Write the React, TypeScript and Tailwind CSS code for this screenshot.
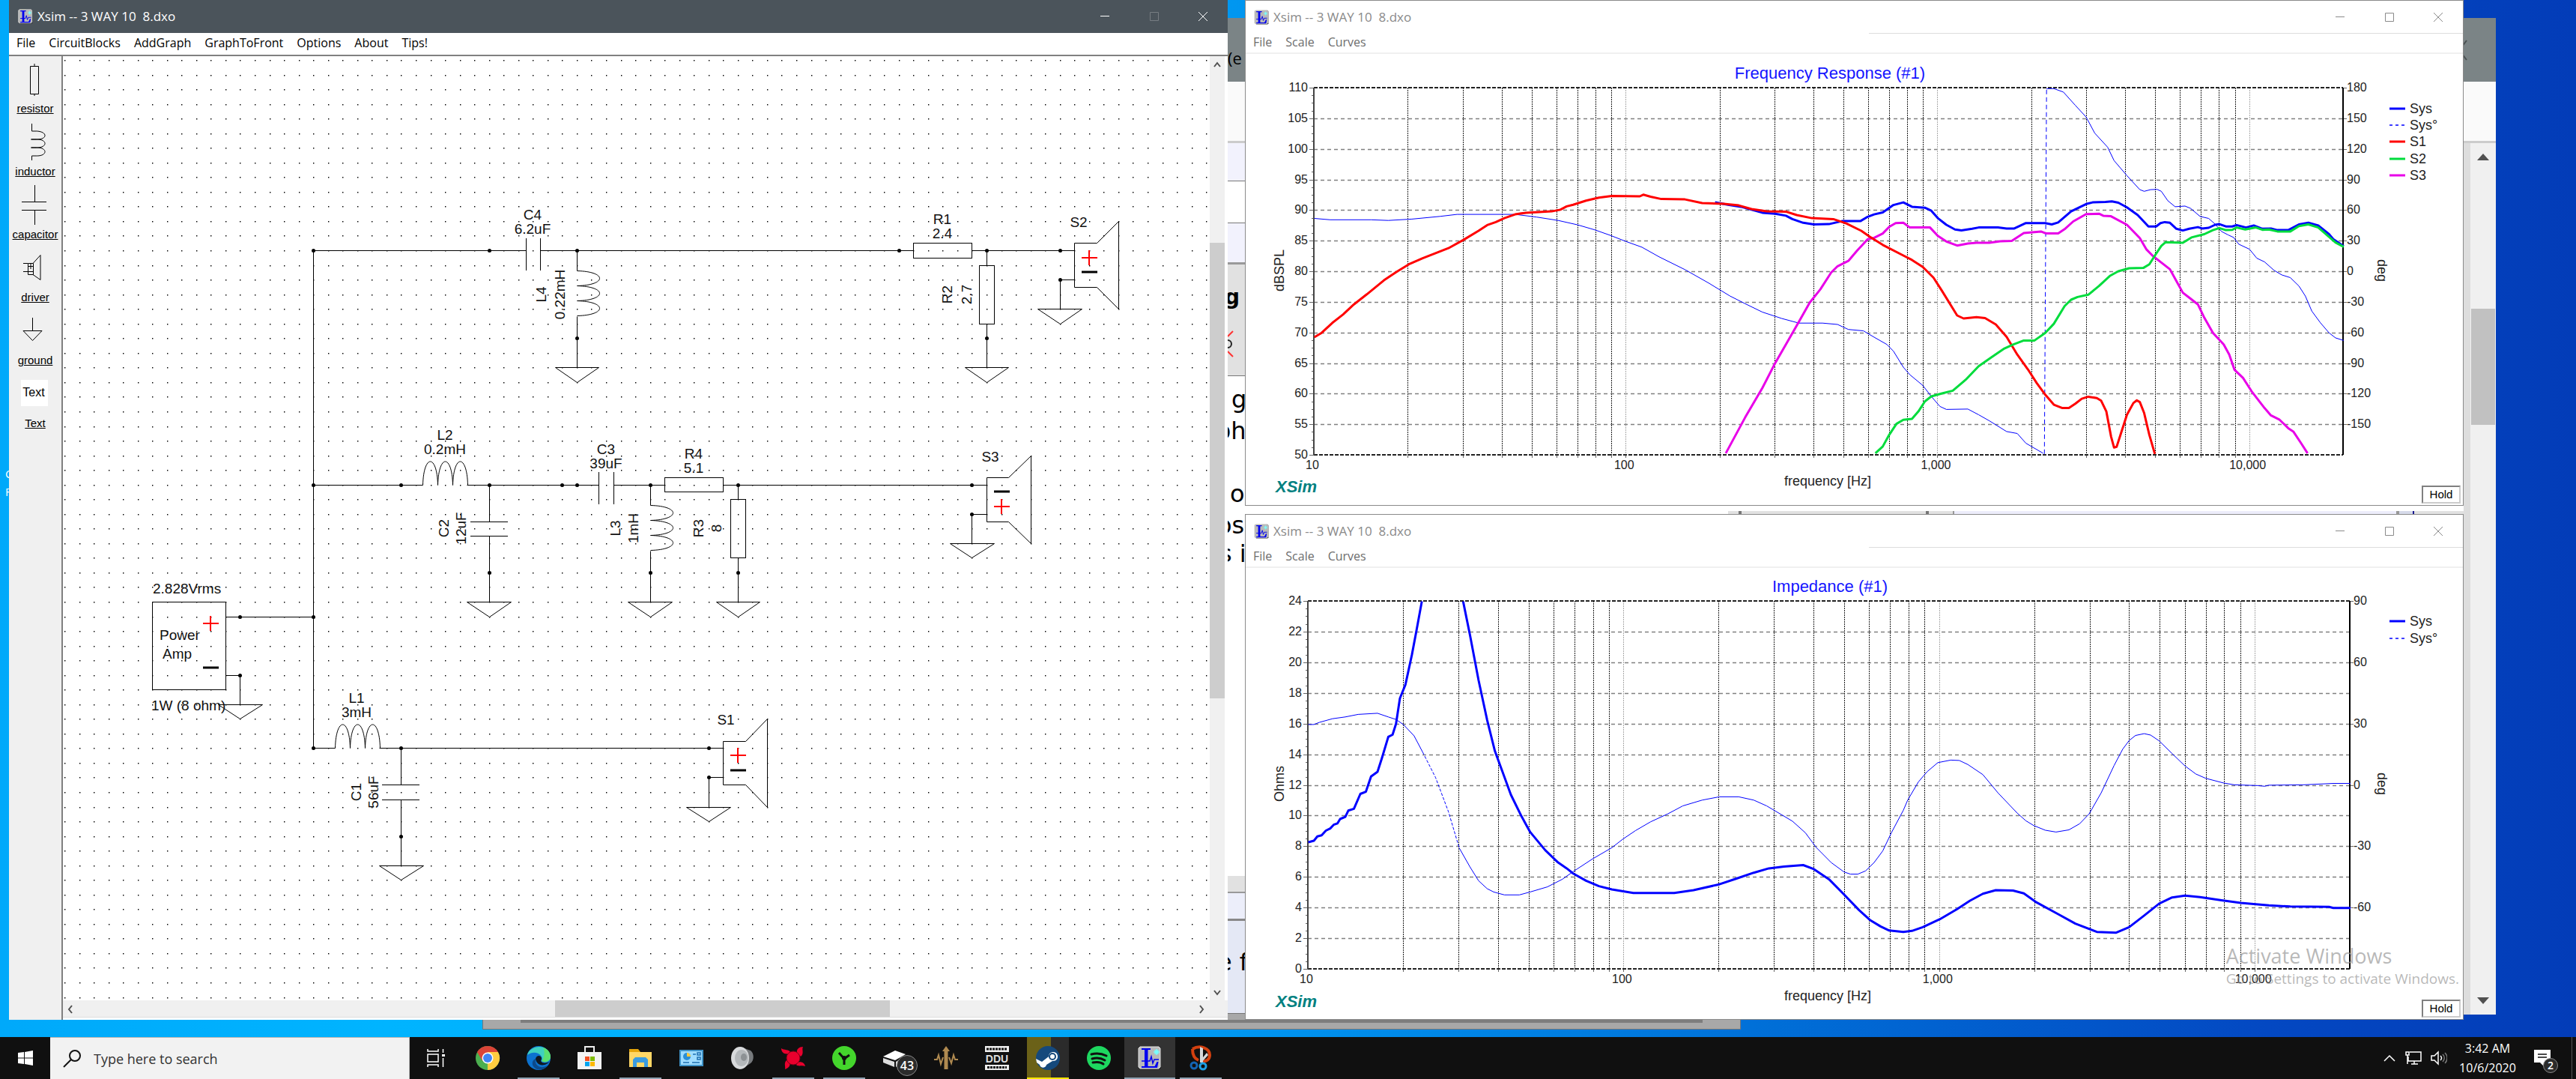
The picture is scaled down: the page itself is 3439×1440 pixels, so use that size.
import React from 'react'
import { clsx } from 'clsx'

const UI = "font-['Open_Sans','Noto_Sans',sans-serif]"
const ARIAL = '"Liberation Sans", Arial, sans-serif'

/* ---------- shared window pieces ---------- */

const XsimIcon: React.FC<{ className?: string }> = ({ className }) => (
  <svg viewBox="0 0 32 32" className={className} aria-hidden="true">
    <path d="M3 3l2-2h24l2 2v26l-2 2H5l-2-2z" fill="#222" />
    <path d="M1 3l2-2h25l2 2v25l-2 2H3l-2-2z" fill="#b9b9b9" stroke="#e8e8e8" />
    <path d="M5 3h12v2h-3.500v22h9l3-6h2l-1.500 8H5v-2h4V5H5z" fill="#0000ee" />
    <path d="M5 20h11l2-6 2 9 2-5h6" fill="none" stroke="#0000ee" strokeWidth="1.500" />
    <path d="M25 4v8M21 8h8M22.500 5.500l5 5M27.500 5.500l-5 5" stroke="#7ff" strokeWidth="1.500" />
  </svg>
)

interface WindowControlsProps {
  dark?: boolean
}

const WindowControls: React.FC<WindowControlsProps> = ({ dark }) => (
  <div className={clsx('ml-auto flex h-full', dark ? 'text-white' : 'text-[#8a8a8a]')}>
    <button aria-label="Minimize" className="flex h-full w-[66px] items-center justify-center">
      <svg width="14" height="14" stroke="currentColor"><path d="M1 6.500h12" /></svg>
    </button>
    <button
      aria-label="Maximize"
      disabled={dark}
      className={clsx('flex h-full w-[65px] items-center justify-center', dark && 'text-[#777d82]')}
    >
      <svg width="14" height="14" stroke="currentColor" fill="none"><path d="M1.500 1.500h11v11h-11z" /></svg>
    </button>
    <button aria-label="Close" className="flex h-full w-[66px] items-center justify-center">
      <svg width="14" height="14" stroke="currentColor"><path d="M1 1l12 12M13 1L1 13" /></svg>
    </button>
  </div>
)

const MenuBar: React.FC<{ items: string[]; className?: string }> = ({ items, className }) => (
  <nav className={clsx('flex items-center gap-[18px] pb-1 pl-[10px] text-[16px] leading-5', className)}>
    {items.map((item) => (
      <button key={item}>{item}</button>
    ))}
  </nav>
)

/* ---------- schematic editor ---------- */

const STEP = 19.54
const gx = (i: number) => Math.round(86 + i * STEP)
const gy = (j: number) => Math.round(80 + j * STEP)

const gridDots = () => {
  let d = ''
  for (let i = 0; i < 79; i++) {
    for (let j = 0; j < 65; j++) {
      d += `M${gx(i)} ${gy(j)}h1.4v1.4h-1.4z`
    }
  }
  return d
}
const GRID = gridDots()

const Wire: React.FC<{ pts: number[][] }> = ({ pts }) => (
  <polyline points={pts.map(([x, y]) => `${gx(x) + 0.5},${gy(y) + 0.5}`).join(' ')} />
)

const Dot: React.FC<{ x: number; y: number }> = ({ x, y }) => (
  <circle cx={gx(x) + 0.5} cy={gy(y) + 0.5} r="2.5" fill="#000" stroke="none" />
)

const Ground: React.FC<{ x: number; y: number }> = ({ x, y }) => (
  <>
    <Wire pts={[[x, y - 2], [x, y]]} />
    <Wire pts={[[x - 1.5, y], [x + 1.5, y], [x, y + 1], [x - 1.5, y]]} />
  </>
)

const CoilH: React.FC<{ x: number; y: number }> = ({ x, y }) => {
  const px = gx(x) + 0.5
  const py = gy(y) + 0.5
  return (
    <path
      d={[0, 20, 40].map((o) => `M${px + o} ${py}C${px + o + 1} ${py - 42} ${px + o + 19} ${py - 42} ${px + o + 20} ${py}`).join('')}
    />
  )
}

const CoilV: React.FC<{ x: number; y: number }> = ({ x, y }) => {
  const px = gx(x) + 0.5
  const py = gy(y) + 0.5
  return (
    <path
      d={[0, 20, 40].map((o) => `M${px} ${py + o}C${px + 40} ${py + o + 1} ${px + 40} ${py + o + 19} ${px} ${py + o + 20}`).join('')}
    />
  )
}

const Box: React.FC<{ x: number; y: number; w: number; h: number }> = ({ x, y, w, h }) => (
  <rect x={gx(x) + 0.5} y={gy(y) + 0.5} width={gx(x + w) - gx(x)} height={gy(y + h) - gy(y)} />
)

const Plus: React.FC<{ x: number; y: number }> = ({ x, y }) => (
  <path d={`M${gx(x) - 10} ${gy(y)}h21M${gx(x)} ${gy(y) - 10}v20`} stroke="#f00" strokeWidth="2" />
)

const Minus: React.FC<{ x: number; y: number }> = ({ x, y }) => (
  <path d={`M${gx(x) - 10} ${gy(y)}h21`} strokeWidth="3" />
)

// x, y is the upper terminal; the lower one sits two grid steps below
const Speaker: React.FC<{ x: number; y: number; flipped?: boolean }> = ({ x, y, flipped }) => (
  <>
    <Wire pts={[[x, y], [x + 1, y]]} />
    <Wire pts={[[x, y + 2], [x + 1, y + 2]]} />
    <Wire
      pts={[
        [x + 2.5, y - 0.5], [x + 1, y - 0.5], [x + 1, y + 2.5], [x + 2.5, y + 2.5],
        [x + 4, y + 4], [x + 4, y - 2], [x + 2.5, y - 0.5],
      ]}
    />
    <Plus x={x + 2} y={flipped ? y + 1.5 : y + 0.5} />
    <Minus x={x + 2} y={flipped ? y + 0.5 : y + 1.5} />
    <Dot x={x} y={y} />
    <Dot x={x} y={y + 2} />
    <Ground x={x} y={y + 4} />
  </>
)

interface LabelItem {
  text: string
  x: number
  y: number
  rotated?: boolean
  start?: boolean
}

const LABELS: LabelItem[] = [
  { text: 'C4', x: 711, y: 293 },
  { text: '6.2uF', x: 711, y: 312 },
  { text: 'L4', x: 729, y: 393, rotated: true },
  { text: '0.22mH', x: 754, y: 393, rotated: true },
  { text: 'R1', x: 1258, y: 299 },
  { text: '2.4', x: 1258, y: 318 },
  { text: 'R2', x: 1271, y: 393, rotated: true },
  { text: '2.7', x: 1297, y: 393, rotated: true },
  { text: 'S2', x: 1440, y: 303 },
  { text: 'L2', x: 594, y: 587 },
  { text: '0.2mH', x: 594, y: 606 },
  { text: 'C3', x: 809, y: 606 },
  { text: '39uF', x: 809, y: 625 },
  { text: 'R4', x: 926, y: 612 },
  { text: '5.1', x: 926, y: 631 },
  { text: 'S3', x: 1322, y: 616 },
  { text: 'C2', x: 599, y: 705, rotated: true },
  { text: '12uF', x: 622, y: 705, rotated: true },
  { text: 'L3', x: 828, y: 705, rotated: true },
  { text: '1mH', x: 852, y: 705, rotated: true },
  { text: 'R3', x: 939, y: 705, rotated: true },
  { text: '8', x: 963, y: 705, rotated: true },
  { text: '2.828Vrms', x: 204, y: 792, start: true },
  { text: 'Power', x: 213, y: 854, start: true },
  { text: 'Amp', x: 217, y: 879, start: true },
  { text: '1W (8 ohm)', x: 202, y: 948, start: true },
  { text: 'L1', x: 476, y: 938 },
  { text: '3mH', x: 476, y: 957 },
  { text: 'C1', x: 482, y: 1057, rotated: true },
  { text: '56uF', x: 505, y: 1057, rotated: true },
  { text: 'S1', x: 969, y: 967 },
]

const DOTS = [
  [17, 13], [29, 13], [35, 13], [57, 13], [63, 13], [35, 19], [63, 19],
  [17, 29], [23, 29], [29, 29], [34, 29], [35, 29], [40, 29], [46, 29],
  [29, 35], [40, 35], [46, 35], [12, 38], [17, 38], [12, 42], [17, 47], [23, 47], [23, 53],
]

const Schematic: React.FC = () => (
  <svg viewBox="84 75 1531 1260" preserveAspectRatio="xMinYMin slice" className="min-h-0 min-w-0 flex-1 bg-white">
    <path d={GRID} fill="#000" />
    <g fill="none" stroke="#000">
      {/* trunk */}
      <Wire pts={[[17, 13], [17, 47]]} />
      <Wire pts={[[11, 38], [17, 38]]} />
      {/* tweeter branch */}
      <Wire pts={[[17, 13], [31.5, 13]]} />
      <path d="M702.500 318v43M721.500 318v43" />
      <Wire pts={[[32.5, 13], [58, 13]]} />
      <Wire pts={[[35, 13], [35, 14.4]]} />
      <CoilV x={35} y={14.4} />
      <Wire pts={[[35, 17.5], [35, 19]]} />
      <Ground x={35} y={21} />
      <Box x={58} y={12.5} w={4} h={1} />
      <Wire pts={[[62, 13], [68, 13]]} />
      <Wire pts={[[63, 13], [63, 14]]} />
      <Box x={62.5} y={14} w={1} h={4} />
      <Wire pts={[[63, 18], [63, 19]]} />
      <Ground x={63} y={21} />
      <Speaker x={68} y={13} />
      {/* midrange branch */}
      <Wire pts={[[17, 29], [24.45, 29]]} />
      <CoilH x={24.45} y={29} />
      <Wire pts={[[27.5, 29], [36.5, 29]]} />
      <path d="M799.500 630v43M819.500 630v43" />
      <Wire pts={[[37.5, 29], [41, 29]]} />
      <Box x={41} y={28.5} w={4} h={1} />
      <Wire pts={[[45, 29], [62, 29]]} />
      <Wire pts={[[29, 29], [29, 31.5]]} />
      <path d="M628 696.500h50M628 715.500h50" />
      <Wire pts={[[29, 32.5], [29, 35]]} />
      <Ground x={29} y={37} />
      <Wire pts={[[40, 29], [40, 30.4]]} />
      <CoilV x={40} y={30.4} />
      <Wire pts={[[40, 33.5], [40, 35]]} />
      <Ground x={40} y={37} />
      <Wire pts={[[46, 29], [46, 30]]} />
      <Box x={45.5} y={30} w={1} h={4} />
      <Wire pts={[[46, 34], [46, 35]]} />
      <Ground x={46} y={37} />
      <Speaker x={62} y={29} flipped />
      {/* woofer branch */}
      <Wire pts={[[17, 47], [18.45, 47]]} />
      <CoilH x={18.45} y={47} />
      <Wire pts={[[21.5, 47], [44, 47]]} />
      <Wire pts={[[23, 47], [23, 49.5]]} />
      <path d="M510 1047.500h50M510 1067.500h50" />
      <Wire pts={[[23, 50.5], [23, 53]]} />
      <Ground x={23} y={55} />
      <Speaker x={44} y={47} />
      {/* amplifier */}
      <Box x={6} y={37} w={5} h={6} />
      <Wire pts={[[11, 42], [12, 42]]} />
      <Ground x={12} y={44} />
      <Plus x={10} y={38.5} />
      <Minus x={10} y={41.5} />
      {DOTS.map(([x, y]) => (
        <Dot key={`${x}-${y}`} x={x} y={y} />
      ))}
    </g>
    <g fontFamily={ARIAL} fontSize="19" fill="#111">
      {LABELS.map((l) => (
        <text
          key={l.text}
          x={l.x}
          y={l.y}
          textAnchor={l.start ? 'start' : 'middle'}
          transform={l.rotated ? `rotate(-90 ${l.x} ${l.y})` : undefined}
        >
          {l.text}
        </text>
      ))}
    </g>
  </svg>
)

const PARTS: { name: string; art: React.ReactNode }[] = [
  { name: 'resistor', art: <path d="M28.500 13.500h11v37h-11zM34 10v3M34 50v3" /> },
  {
    name: 'inductor',
    art: <path d="M30.500 6v10h7c14 1 14 11 0 11h-8h8c14 0 14 11 0 11h-8h8c14 0 14 11 0 11h-7v6" />,
  },
  { name: 'capacitor', art: <path d="M34.500 4v22M17 26.500h33M17 37.500h33M34.500 38v19" /> },
  {
    name: 'driver',
    art: <path d="M25.500 24.500h7v15h-7zM32 24.500l10-11v33l-10-7M19 24.500h6M19 35.500h6M26 28.500h6M29 25v7M26 35.500h6" />,
  },
  { name: 'ground', art: <path d="M31.500 13v17M19 30.500h25l-12.500 13z" /> },
  {
    name: 'Text',
    art: (
      <>
        <rect x="16" y="12" width="36" height="35" fill="#fff" stroke="none" />
        <text x="33" y="34" textAnchor="middle" fontFamily={ARIAL} fontSize="16" fill="#000" stroke="none">Text</text>
      </>
    ),
  },
]

const PartsPalette: React.FC = () => (
  <aside className="flex w-[70px] shrink-0 flex-col bg-[#f0f0f0]">
    {PARTS.map((part) => (
      <button
        key={part.name}
        className="flex h-[84px] flex-col items-center pb-1 font-['Liberation_Sans',Arial,sans-serif] text-[15px] leading-5 underline"
      >
        <svg viewBox="0 0 70 60" className="h-[60px] w-full" fill="none" stroke="#000">
          {part.art}
        </svg>
        {part.name}
      </button>
    ))}
  </aside>
)

const Chevron: React.FC<{ d: string }> = ({ d }) => (
  <svg width="20" height="20" fill="none" stroke="#505050" strokeWidth="2" className="shrink-0">
    <path d={d} />
  </svg>
)

const EditorWindow: React.FC = () => (
  <section className="absolute bottom-[23px] left-[12px] top-0 flex w-[1627px] flex-col bg-white">
    <header className="flex h-11 shrink-0 items-center bg-[#4b545b] pl-3 text-white">
      <XsimIcon className="h-5 w-5" />
      <h1 className="ml-[6px] whitespace-pre text-[17px] leading-5">Xsim -- 3 WAY 10  8.dxo</h1>
      <WindowControls dark />
    </header>
    <MenuBar
      className="h-[31px] shrink-0 border-b-2 border-[#808080] text-black"
      items={['File', 'CircuitBlocks', 'AddGraph', 'GraphToFront', 'Options', 'About', 'Tips!']}
    />
    <div className="flex min-h-0 flex-1">
      <PartsPalette />
      <div className="flex min-w-0 flex-1 flex-col border-l-2 border-[#808080]">
        <div className="flex min-h-0 flex-1">
          <Schematic />
          <div className="flex w-5 shrink-0 flex-col bg-[#f0f0f0]">
            <Chevron d="M6 14l4-5 4 5" />
            <div className="mt-[229px] h-[608px] bg-[#cdcdcd]" />
            <div className="mt-auto"><Chevron d="M6 7l4 5 4-5" /></div>
          </div>
          <div className="w-1 shrink-0 bg-white" />
        </div>
        <div className="flex h-[22px] shrink-0 items-center bg-[#f0f0f0] pr-6">
          <Chevron d="M12 6l-4 5 4 5" />
          <div className="ml-[637px] h-full w-[447px] bg-[#cdcdcd]" />
          <div className="ml-auto"><Chevron d="M7 6l4 5-4 5" /></div>
        </div>
        <div className="h-1 shrink-0 border-t border-[#ddd]" />
      </div>
    </div>
  </section>
)

/* ---------- graph windows ---------- */

// traces are stored in raster units, counted from the left edge of the window
const UNIT_X = 0.574
const ORIGIN_X = -22

interface Trace {
  color: string
  width: number
  dash?: string
  pts: number[]
}

interface GraphProps {
  title: string
  plot: { left: number; right: number; top: number; bottom: number }
  unitY: number
  originY: number
  yLabel: string
  degY: number
  left: string[]
  right: string[]
  rightEvery: number
  traces: Trace[]
  legend: { name: string; color: string; dashed?: boolean }[]
  legendY: number[]
  view: string
  footY: number
}

const BLUE = '#0000ff'

const GraphBody: React.FC<GraphProps> = (g) => {
  const { left, right, top, bottom } = g.plot
  const decade = (right - left) / Math.log10(2000)
  const rowH = (bottom - top) / (g.left.length - 1)

  const verticals: { x: number; major: boolean }[] = []
  for (let d = 0; d < 4; d++) {
    for (let n = 1; n < 10; n++) {
      const x = left + decade * (d + Math.log10(n))
      if (x > left + 1 && x < right - 1) verticals.push({ x: Math.round(x) + 0.5, major: n === 1 })
    }
  }
  const minors = Array.from({ length: (g.left.length - 1) * 4 }, (_, i) => Math.round(top + (i * rowH) / 4) + 0.5)

  const toPoints = (pts: number[]) => {
    const out: string[] = []
    for (let i = 0; i < pts.length; i += 2) {
      out.push(`${(ORIGIN_X + pts[i] * UNIT_X).toFixed(1)},${(g.originY + pts[i + 1] * g.unitY).toFixed(1)}`)
    }
    return out.join(' ')
  }

  return (
    <svg viewBox={g.view} preserveAspectRatio="xMinYMin meet" className="block h-full w-full" fontFamily={ARIAL}>
      <text x="780" y={top - 12} textAnchor="middle" fontSize="22" fill="#1414ff">{g.title}</text>

      <g stroke="#808080" strokeWidth="1.5" strokeDasharray="5 4">
        {g.left.map((v, i) => {
          const y = Math.round(top + i * rowH) + 0.5
          return i > 0 && i < g.left.length - 1 && <path key={v} d={`M${left} ${y}H${right}`} />
        })}
      </g>
      <g strokeDasharray="2 1">
        {verticals.map((v) => (
          <path key={v.x} d={`M${v.x} ${top}V${bottom}`} stroke={v.major ? '#aaa' : '#222'} />
        ))}
      </g>
      <g stroke="#666">
        {verticals.map((v) => (
          <path key={v.x} d={`M${v.x} ${bottom}v4`} />
        ))}
        {minors.map((y) => (
          <path key={y} d={`M${left - 3} ${y}h3`} />
        ))}
        {g.left.map((v, i) => (
          <path key={v} d={`M${left - 6} ${Math.round(top + i * rowH) + 0.5}h6`} />
        ))}
        {g.right.map((v, i) => (
          <path key={v} d={`M${right} ${Math.round(top + i * rowH * g.rightEvery) + 0.5}h5`} />
        ))}
      </g>
      <path d={`M${left} ${top}H${right}M${left} ${bottom}H${right}`} stroke="#222" strokeWidth="2" strokeDasharray="5 2" />
      <path d={`M${left} ${top}V${bottom}`} stroke="#444" strokeWidth="2" />
      <path d={`M${right} ${top}V${bottom}`} stroke="#000" strokeWidth="2" />

      <g fill="none" strokeLinejoin="round">
        {g.traces.map((t, i) => (
          <polyline key={i} points={toPoints(t.pts)} stroke={t.color} strokeWidth={t.width} strokeDasharray={t.dash} />
        ))}
      </g>

      <g fontSize="16" fill="#222">
        {g.left.map((v, i) => (
          <text key={v} x={left - 8} y={Math.round(top + i * rowH) + 5} textAnchor="end">{v}</text>
        ))}
        {g.right.map((v, i) => (
          <text key={v} x={right + 5} y={Math.round(top + i * rowH * g.rightEvery) + 5}>{v}</text>
        ))}
        {['10', '100', '1,000', '10,000'].map((v, i) => (
          <text key={v} x={left + decade * i - 2} y={bottom + 19} textAnchor="middle">{v}</text>
        ))}
      </g>
      <g fontSize="18" fill="#222">
        <text x="777" y={g.footY - 9} textAnchor="middle">frequency [Hz]</text>
        <text x="51" y={g.degY} textAnchor="middle" transform={`rotate(-90 51 ${g.degY})`}>{g.yLabel}</text>
        <text x="1511" y={g.degY} textAnchor="middle" transform={`rotate(90 1511 ${g.degY})`}>deg</text>
        {g.legend.map((l, i) => (
          <g key={l.name}>
            <path
              d={`M1527 ${g.legendY[i]}h21`}
              stroke={l.color}
              strokeWidth={l.dashed ? 1.5 : 3}
              strokeDasharray={l.dashed ? '4 4' : undefined}
            />
            <text x="1554" y={g.legendY[i] + 6}>{l.name}</text>
          </g>
        ))}
      </g>
      <text x="40" y={g.footY} fontSize="22" fontWeight="bold" fontStyle="italic" fill="#008080">XSim</text>
    </svg>
  )
}

const GraphWindow: React.FC<GraphProps & { className: string }> = ({ className, ...graph }) => (
  <section className={clsx('absolute left-[1662px] right-[150px] flex flex-col border border-[#8a8a8a] bg-white', className)}>
    <header className="flex h-[43px] shrink-0 items-center pl-[11px] text-[#8a8a8a]">
      <XsimIcon className="h-5 w-5" />
      <h2 className="ml-[6px] whitespace-pre text-[17px] leading-5">Xsim -- 3 WAY 10  8.dxo</h2>
      <WindowControls />
    </header>
    <div className="ml-[832px] shrink-0 border-t border-[#ddd]" />
    <MenuBar className="h-[27px] shrink-0 border-b-2 border-[#f0f0f0] text-[#6d6d6d]" items={['File', 'Scale', 'Curves']} />
    <div className="min-h-0 flex-1">
      <GraphBody {...graph} />
    </div>
    <button className="absolute bottom-[2px] right-[3px] h-6 w-[52px] border-2 border-b-[#ccc] border-l-[#808080] border-r-[#ccc] border-t-[#808080] bg-white font-['Liberation_Sans',Arial,sans-serif] text-[15px] leading-5 text-black">
      Hold
    </button>
  </section>
)

const RESPONSE: Trace[] = [
  {
    color: BLUE, width: 1,
    pts: [198,653,235,657,330,657,370,659,425,655,490,647,530,641,665,641,715,649,765,659,810,672,850,687,885,703,925,723,960,739,1000,768,1060,806,1115,846,1165,885,1200,908,1240,933,1285,952,1325,966,1380,966,1415,970,1440,985,1475,989,1500,1008,1530,1030,1545,1050,1568,1098,1583,1120,1613,1152,1633,1185,1653,1215,1668,1224,1718,1223,1743,1240,1768,1258,1808,1290,1833,1296,1853,1325,1893,1355],
  },
  { color: BLUE, width: 1, dash: '6 4', pts: [1896,1357,1901,265] },
  {
    color: BLUE, width: 1,
    pts: [1901,265,1918,265,1940,275,1968,315,1993,350,2013,398,2043,440,2058,480,2088,525,2118,567,2128,572,2143,567,2158,566,2168,572,2183,600,2200,618,2223,616,2236,623,2258,647,2278,653,2293,670,2308,692,2323,702,2336,710,2348,730,2373,745,2390,772,2408,783,2430,808,2448,822,2468,830,2488,855,2503,885,2518,930,2538,965,2558,995,2573,1010,2592,1018],
  },
  {
    color: BLUE, width: 3,
    pts: [1130,605,1160,612,1190,618,1215,627,1240,636,1270,639,1295,645,1310,655,1335,666,1360,671,1395,670,1425,661,1468,661,1485,648,1500,641,1520,635,1545,613,1568,605,1588,618,1618,621,1633,630,1648,652,1668,672,1688,686,1703,689,1728,684,1743,680,1788,680,1808,683,1826,683,1853,667,1898,667,1913,671,1928,665,1958,632,1993,610,2008,605,2038,604,2053,602,2068,606,2088,620,2113,643,2138,677,2156,677,2166,667,2176,664,2188,666,2203,684,2218,689,2233,684,2253,679,2263,683,2278,681,2293,672,2303,670,2318,677,2333,677,2343,673,2365,680,2383,674,2403,684,2423,683,2438,688,2463,688,2488,671,2510,666,2533,674,2558,700,2568,715,2592,736],
  },
  {
    color: '#e800e8', width: 3,
    pts: [1155,1355,1200,1248,1240,1160,1268,1090,1300,1018,1325,962,1350,905,1375,865,1400,815,1415,796,1440,780,1460,750,1485,715,1500,711,1520,698,1535,678,1550,667,1568,666,1583,680,1630,680,1648,705,1668,722,1693,734,1718,728,1738,726,1768,726,1793,721,1820,720,1848,697,1888,692,1900,698,1928,698,1943,685,1963,662,1993,640,2023,639,2033,645,2050,646,2088,672,2118,712,2133,745,2148,765,2168,785,2188,805,2203,840,2218,875,2233,890,2253,910,2268,950,2288,995,2313,1030,2326,1060,2338,1105,2358,1130,2378,1170,2408,1220,2423,1242,2443,1255,2463,1280,2475,1290,2493,1325,2508,1355],
  },
  {
    color: '#f00', width: 3,
    pts: [198,1008,215,995,240,965,265,940,290,910,320,880,360,838,390,812,418,790,450,772,480,757,510,742,545,717,580,690,600,673,620,664,640,652,665,641,690,636,750,632,770,627,785,617,800,612,830,600,860,591,890,586,955,587,963,582,980,588,1005,595,1060,596,1100,607,1150,609,1185,614,1215,625,1250,632,1296,633,1320,643,1355,652,1405,655,1435,668,1470,690,1490,708,1520,732,1568,764,1588,777,1613,798,1638,830,1658,870,1693,943,1708,952,1738,948,1758,951,1783,970,1808,1007,1833,1060,1858,1105,1878,1145,1898,1180,1918,1210,1938,1220,1953,1220,1968,1207,1983,1192,1998,1186,2018,1190,2028,1198,2040,1230,2051,1305,2058,1338,2064,1336,2073,1300,2088,1240,2103,1205,2111,1197,2118,1202,2128,1235,2140,1300,2153,1357],
  },
  {
    color: '#00dc3c', width: 3,
    pts: [1503,1355,1520,1335,1535,1300,1552,1267,1568,1255,1588,1252,1603,1230,1618,1200,1633,1185,1658,1176,1683,1168,1713,1135,1743,1095,1773,1068,1803,1042,1823,1030,1848,1018,1873,1018,1898,995,1918,968,1943,915,1958,896,1973,888,1998,881,2023,855,2048,825,2068,811,2093,802,2126,801,2140,790,2155,760,2168,735,2178,724,2218,726,2238,710,2268,700,2288,688,2303,682,2318,688,2333,687,2343,680,2363,686,2388,680,2403,687,2418,686,2438,692,2468,692,2488,676,2510,671,2533,680,2558,708,2573,725,2592,738],
  },
]

const IMPEDANCE: Trace[] = [
  {
    color: BLUE, width: 1,
    pts: [184,592,197,592,210,586,240,576,270,571,300,564,345,561,370,571,388,578,405,592,430,623,450,668],
  },
  { color: BLUE, width: 1, dash: '4 2', pts: [450,668,480,738,510,832,535,932] },
  {
    color: BLUE, width: 1,
    pts: [535,932,560,984,580,1022,600,1044,615,1053,640,1061,675,1061,700,1053,740,1039,775,1018,800,997,845,962,890,931,915,908,945,884,980,860,1020,838,1055,816,1100,800,1140,791,1185,791,1220,800,1250,816,1270,830,1310,858,1340,890,1365,930,1400,972,1430,998,1445,1004,1462,1004,1480,995,1500,972,1520,940,1540,890,1568,828,1578,800,1603,750,1623,722,1648,697,1678,690,1698,691,1718,702,1753,730,1788,780,1833,836,1853,857,1871,870,1898,883,1923,888,1953,882,1978,865,2000,838,2028,780,2058,705,2078,660,2093,636,2108,622,2128,617,2143,621,2163,637,2193,672,2223,706,2248,728,2271,740,2313,753,2338,758,2393,760,2408,762,2418,759,2498,758,2568,754,2608,754],
  },
  {
    color: BLUE, width: 3,
    pts: [184,916,197,912,205,900,215,897,225,884,235,878,243,868,252,864,258,852,270,846,277,829,290,824,305,783,318,777,330,735,345,722,355,685,370,626,380,620,388,590,397,520,410,482,425,400,436,330,448,253],
  },
  {
    color: BLUE, width: 3,
    pts: [544,253,560,345,580,470,600,580,618,665,635,720,655,785,680,845,700,888,735,938,765,972,785,988,800,1002,830,1022,860,1037,890,1046,940,1056,1035,1056,1080,1048,1140,1032,1180,1016,1220,1000,1255,988,1290,983,1335,979,1360,990,1395,1018,1430,1060,1465,1103,1490,1130,1515,1148,1535,1159,1568,1163,1588,1160,1613,1150,1653,1128,1693,1100,1723,1077,1753,1058,1783,1048,1823,1049,1848,1057,1878,1082,1928,1114,1968,1140,2018,1163,2063,1165,2093,1150,2128,1118,2163,1085,2193,1068,2223,1063,2258,1067,2308,1076,2353,1083,2418,1090,2468,1093,2558,1094,2568,1097,2608,1097],
  },
]

/* ---------- page behind the windows ---------- */

const BackgroundBrowser: React.FC = () => (
  <div className="absolute bottom-[30px] left-[1639px] right-[107px] top-[24px] flex flex-col overflow-hidden bg-white font-['DejaVu_Sans',Verdana,sans-serif] text-black">
    <div className="flex h-[85px] shrink-0 items-center justify-between bg-[#7b8486]">
      <span className="pt-5 font-['Open_Sans',sans-serif] text-[22px] leading-8">(e</span>
      <svg width="60" height="28" stroke="#4a5052" strokeWidth="2"><path d="M1 1l20 26M21 1L1 27" /></svg>
    </div>
    <div className="h-[82px] shrink-0 border-b-[3px] border-[#ccc] bg-[#fafafa]" />
    <div className="flex min-h-0 flex-1">
      <div className="flex min-w-0 flex-1 flex-col overflow-hidden">
        <div className="h-[51px] shrink-0 border-b border-[#777] bg-[#f2f2fd]" />
        <div className="h-14 shrink-0 border-b border-[#777]" />
        <div className="h-[55px] shrink-0 border-b-[3px] border-[#999] bg-[#f2f2fd]" />
        <div className="flex h-[149px] shrink-0 flex-col border-b border-[#777] bg-[#e1e1e1] pt-7">
          <span className="-ml-1 text-[28px] font-bold leading-8">g</span>
          <svg width="12" height="36" fill="none" className="mt-7">
            <path d="M0 8l7-7M0 28l7 7" stroke="#f33" strokeWidth="2" />
            <circle cx="0" cy="18" r="5" stroke="#222" strokeWidth="2" />
          </svg>
        </div>
        <div className="h-[180px] shrink-0 text-[32px] leading-[42px]">
          <p className="mt-[10px] pl-[5px]">g</p>
          <p className="-ml-4 whitespace-nowrap">ph</p>
          <p className="mt-[42px] pl-[3px]">o</p>
        </div>
        {/* strip that shows between the two graph windows */}
        <div className="flex h-5 shrink-0">
          <div className="flex-1" />
          <div className="h-full w-[18px] border-r-4 border-[#777] bg-[#e1e1e1]" />
          <div className="h-full w-[250px] border-r-4 border-[#777] bg-[#e1e1e1]" />
          <div className="h-full w-[34px] border-r-2 border-[#999] bg-[#e1e1e1]" />
          <div className="h-full w-[594px] border-r-4 border-[#999] bg-[#ededfb]" />
          <div className="h-full w-5 border-r-2 border-[#1a1a90] bg-[#d6daea]" />
          <div className="h-full w-[66px] bg-[#e1e1e1]" />
        </div>
        <div className="-mt-5 flex-1 text-[32px] leading-[38px]">
          <p className="-ml-[14px] whitespace-nowrap">os</p>
          <p className="-ml-[11px] whitespace-nowrap">s i</p>
        </div>
        <div className="h-[23px] shrink-0 border-b-2 border-[#999] bg-[#e1e1e1]" />
        <div className="h-[37px] shrink-0 border-b-[3px] border-[#888] bg-[#eceefa]" />
        <div className="h-[125px] shrink-0 bg-[#e4e8f5] pt-[34px] text-[32px] leading-[42px]">
          <p className="-ml-[14px] whitespace-nowrap">e f</p>
        </div>
      </div>
      <div className="w-[9px] shrink-0 bg-[#ddd]" />
      <div className="flex w-[34px] shrink-0 flex-col items-center bg-[#f0f0f0] py-[14px]">
        <svg width="16" height="9" fill="#505050"><path d="M0 9l8-9 8 9z" /></svg>
        <div className="mt-[198px] h-[155px] w-8 bg-[#c1c1c1]" />
        <svg width="16" height="9" fill="#505050" className="mt-auto shrink-0"><path d="M0 0l8 9 8-9z" /></svg>
      </div>
    </div>
  </div>
)

/* ---------- taskbar ---------- */

interface TaskItem {
  name: string
  icon: React.ReactNode
  running?: boolean
}

const TASKS: TaskItem[] = [
  {
    name: 'Google Chrome',
    icon: (
      <>
        <circle cx="16" cy="16" r="16" fill="#4caf50" />
        <path d="M16 16L2.100 8A16 16 0 0 1 29.900 8z" fill="#db4437" />
        <path d="M16 16L29.900 8A16 16 0 0 1 16 32z" fill="#ffcd40" />
        <path d="M16 8h14L23 20z" fill="#ffcd40" />
        <path d="M9 20L2 8l14 0z" fill="#db4437" />
        <circle cx="16" cy="16" r="7.500" fill="#fff" />
        <circle cx="16" cy="16" r="6" fill="#4285f4" />
      </>
    ),
  },
  {
    name: 'Microsoft Edge',
    running: true,
    icon: (
      <>
        <circle cx="16" cy="16" r="16" fill="#0c72cf" />
        <path d="M1 12C4-2 30-4 32 14c0 7-8 9-12 6 4-7-8-16-19-8z" fill="#3fd0c0" />
        <path d="M22 2c7 2 10 8 10 12 0 7-8 9-12 6 5-6 4-14 2-18z" fill="#5be070" />
        <path d="M12 17c-2 10 8 14 16 9-4 6-10 6-14 5-8-3-8-12-2-14z" fill="#0c4a8c" />
        <path d="M12 17c1-5 7-5 8-1 0 2-1 3-1 4 2 4 8 3 11 1-3 5-16 8-18-4z" fill="#101820" />
      </>
    ),
  },
  {
    name: 'Microsoft Store',
    icon: (
      <>
        <path d="M10 9V1h12v8" fill="none" stroke="#eee" strokeWidth="2" />
        <path d="M0 8h32v23H0z" fill="#f3f3f3" />
        <path d="M10 14h6v6h-6z" fill="#f25022" />
        <path d="M17 14h6v6h-6z" fill="#7fba00" />
        <path d="M10 21h6v6h-6z" fill="#00a4ef" />
        <path d="M17 21h6v6h-6z" fill="#ffb900" />
      </>
    ),
  },
  {
    name: 'File Explorer',
    running: true,
    icon: (
      <>
        <path d="M1 4h12l3 4H1z" fill="#e5a50a" />
        <path d="M1 8h30v20H1z" fill="#ffd766" />
        <path d="M6 28V18l3-3h14l3 3v10h-5v-6h-10v6z" fill="#3a9be0" />
      </>
    ),
  },
  {
    name: 'Control Panel',
    icon: (
      <>
        <path d="M1 6h30v20H1z" fill="#9fdcff" stroke="#3f93c8" strokeWidth="2" />
        <circle cx="10" cy="14" r="5" fill="#2b8fd6" />
        <path d="M10 14V9a5 5 0 0 1 5 5z" fill="#ffc83d" />
        <path d="M18 11h4M24 9h4v3h-4zM24 15h4v3h-4zM5 22h8M17 22h10" stroke="#1f6fb0" strokeWidth="1.500" fill="none" />
      </>
    ),
  },
  {
    name: 'Sound',
    icon: (
      <>
        <path d="M13 1l14 5c5 4 5 13 0 17l-12 8z" fill="#777a7d" />
        <ellipse cx="13" cy="16" rx="12" ry="15" fill="#d8dadc" />
        <ellipse cx="15" cy="16" rx="9" ry="11" fill="#b4b8bb" />
        <ellipse cx="18" cy="15" rx="4" ry="5" fill="#8d9194" />
      </>
    ),
  },
  {
    name: 'Fan Control',
    running: true,
    icon: (
      <g fill="#e8002d">
        <path d="M10 10C4 12 0 8 0 3c4 3 10 1 12 5zM21 9c-1-5 3-8 8-8-2 4 2 9-3 13zM22 22c4-2 9 0 10 5-5-2-9 1-12-2zM10 20c3 3 2 9-5 11 1-4-2-8 2-12z" />
        <path d="M9 9l14 14M23 9L9 23" stroke="#e8002d" strokeWidth="3" />
        <circle cx="16" cy="16" r="9" stroke="#7d0018" />
      </g>
    ),
  },
  {
    name: 'Razer',
    running: true,
    icon: (
      <>
        <circle cx="16" cy="16" r="16" fill="#44d62c" />
        <path d="M16 17L9 9M16 17l7-5M16 17v8" stroke="#101010" strokeWidth="3" />
        <circle cx="16" cy="16" r="3" fill="#101010" />
      </>
    ),
  },
  {
    name: 'Storage',
    icon: (
      <>
        <path d="M0 14L16 6l14 5-14 8z" fill="#fff" />
        <path d="M0 16l15 5v7L0 22zM17 21l13-8v6l-13 9z" fill="#ddd" />
      </>
    ),
  },
  {
    name: 'Equalizer',
    icon: (
      <g fill="none" stroke="#b08a50">
        <path d="M0 18h4l2-6 3 12 3-9M20 15l3 8 3-11 2 6h4" strokeWidth="2" />
        <path d="M16 4v27" strokeWidth="5" />
        <path d="M11 7l5-7 5 7z" fill="#b08a50" stroke="none" />
      </g>
    ),
  },
  {
    name: 'Display Driver Uninstaller',
    icon: (
      <>
        <path d="M0 0h32v32H0z" fill="#eee" />
        <path d="M0 8h32v17H0z" fill="#111" />
        <text x="16" y="22" textAnchor="middle" fontFamily={ARIAL} fontWeight="bold" fontSize="14" fill="#ddd">DDU</text>
        <path d="M2 4h28M3 28.500h26" stroke="#111" strokeWidth="3" strokeDasharray="3 1" />
      </>
    ),
  },
  {
    name: 'Steam',
    icon: (
      <>
        <circle cx="16" cy="16" r="16" fill="#15497c" />
        <path d="M0 17l8 4 9-7c0-8 12-8 12 0 0 5-4 6-7 6l-8 5c-1 5-8 5-9 0L1 22z" fill="#fff" />
        <circle cx="22" cy="14" r="4" fill="#fff" stroke="#15497c" strokeWidth="2" />
      </>
    ),
  },
  {
    name: 'Spotify',
    icon: (
      <>
        <circle cx="16" cy="16" r="16" fill="#1ed760" />
        <path d="M6 11c7-2 14-1 20 2M7 17c6-2 12-1 17 2M8 22c5-1 10-1 14 2" fill="none" stroke="#101010" strokeWidth="3" strokeLinecap="round" />
      </>
    ),
  },
  { name: 'Xsim', running: true, icon: <XsimIcon /> },
  {
    name: 'Snipping Tool',
    running: true,
    icon: (
      <>
        <path d="M5 4c10-6 23-1 23 8 0 6-5 9-9 8M5 4c0 8 3 13 8 15" fill="none" stroke="#d4400f" strokeWidth="4" />
        <path d="M15 1l4 2v19h-4zM24 9l2 3-9 10-2-2z" fill="#d5d8da" />
        <circle cx="7" cy="26" r="4" fill="none" stroke="#1464b4" strokeWidth="3" />
        <circle cx="19" cy="27" r="4" fill="none" stroke="#1ea0e6" strokeWidth="3" />
      </>
    ),
  },
]

const TaskButton: React.FC<TaskItem> = ({ name, icon, running }) => (
  <button
    aria-label={name}
    className={clsx(
      'relative flex h-full w-[68px] items-center justify-center',
      name === 'Xsim' && 'bg-[#333]',
    )}
  >
    {name === 'Steam' && (
      <span className="absolute inset-y-0 left-[6px] flex w-14 border-b-2 border-[#ffe600]">
        <span className="h-full w-8 bg-[#6b6118]" />
        <span className="h-full flex-1 bg-[#2b2b2b]" />
      </span>
    )}
    <svg viewBox="0 0 32 32" className="relative h-8 w-8 overflow-visible">{icon}</svg>
    {running && (
      <span className={clsx('absolute bottom-0 h-[2px] bg-[#8fa3b3]', name === 'Xsim' ? 'inset-x-0' : 'inset-x-[6px]')} />
    )}
    {name === 'Storage' && (
      <span className="absolute bottom-1 right-1 flex h-7 w-7 items-center justify-center rounded-full border border-[#888] bg-[#2b2b2b] text-[16px] font-semibold leading-5 text-white">
        43
      </span>
    )}
  </button>
)

const Taskbar: React.FC = () => (
  <footer className="relative flex h-14 shrink-0 items-center bg-[#101010] text-white">
    <button aria-label="Start" className="flex h-full w-[67px] items-center justify-center">
      <svg width="20" height="20" fill="#fff">
        <path d="M0 3l8-1v7.500H0zM9 1.900L20 0v9.500H9zM0 10.500h8V18l-8-1zM9 10.500h11V20L9 18.100z" />
      </svg>
    </button>
    <label className="flex h-full w-[480px] items-center border-t border-r border-[#b5b5b5] bg-[#f2f2f2] pl-4">
      <svg width="26" height="26" fill="none" stroke="#111" strokeWidth="2">
        <circle cx="17" cy="9" r="7" />
        <path d="M12 14L2 24" />
      </svg>
      <span className="sr-only">Search</span>
      <input
        type="text"
        placeholder="Type here to search"
        className="ml-4 w-80 bg-transparent text-[18px] leading-6 outline-none placeholder:text-[#333]"
      />
    </label>
    <button aria-label="Task View" className="flex h-full w-[70px] items-center justify-center">
      <svg width="26" height="24" fill="none" stroke="#fff" strokeWidth="1.500">
        <path d="M2 0v3h14V0M2 7h14v10H2zM2 24v-3h14v3M22.500 0v5M22.500 12v12" />
        <path d="M21 8.500h4" strokeWidth="3" />
      </svg>
    </button>
    {TASKS.map((t) => (
      <TaskButton key={t.name} {...t} />
    ))}
    <div className="ml-auto flex h-full items-center">
      <button aria-label="Show hidden icons" className="mr-3">
        <svg width="18" height="12" fill="none" stroke="#fff" strokeWidth="1.500"><path d="M2 10l7-7 7 7" /></svg>
      </button>
      <button aria-label="Network" className="mr-3">
        <svg width="22" height="20" fill="none" stroke="#fff" strokeWidth="1.500">
          <path d="M6 2h15v12H4V8M12 14v4M8 18h9M1 2h4v4H1zM3 6v12" />
        </svg>
      </button>
      <button aria-label="Volume" className="mr-3">
        <svg width="22" height="20" fill="none" stroke="#fff" strokeWidth="1.500">
          <path d="M1 7h4l5-5v16l-5-5H1z" />
          <path d="M13 7c2 2 2 4 0 6" />
          <path d="M16 5c3 3 3 7 0 10M19 3c4 4 4 10 0 14" stroke="#777" />
        </svg>
      </button>
      <time className="w-[84px] text-center text-[16px] leading-[26px]">
        3:42 AM
        <br />
        10/6/2020
      </time>
      <button aria-label="Notifications" className="relative ml-5 mr-[22px] h-8 w-7">
        <svg width="24" height="26" fill="#fff">
          <path d="M0 2h22v17h-8v6l-6-6H0z" />
          <path d="M5 8h12M5 12h12" stroke="#101010" strokeWidth="1.500" />
        </svg>
        <span className="absolute -bottom-1 -right-1 flex h-5 w-5 items-center justify-center rounded-full border border-[#888] bg-[#2b2b2b] text-[14px] font-semibold leading-4">
          2
        </span>
      </button>
      <div className="h-full w-[6px] border-l border-[#555]" />
    </div>
  </footer>
)

export default function App() {
  return (
    <div className={clsx('flex h-screen w-full flex-col overflow-hidden', UI)}>
      <main className="relative min-h-0 flex-1 overflow-hidden bg-[linear-gradient(90deg,#00a9fa_0%,#00b4ff_15%,#00a8f8_40%,#0092ee_50%,#0070d8_68%,#0348c2_88%,#033cb8_100%)]">
        <div className="absolute left-[7px] top-[620px] text-[15px] leading-6 text-white">
          C
          <br />
          F
        </div>
        <BackgroundBrowser />
        <div className="absolute bottom-[10px] left-[644px] flex h-[22px] w-[1680px] items-center border border-[#777] bg-[#a8a8a8] px-[50px]">
          <div className="h-1 flex-1 bg-[#7d7d7d]" />
        </div>
        <EditorWindow />
        <GraphWindow
          className="bottom-[709px] top-0"
          title="Frequency Response (#1)"
          view="0 72 1625 602"
          plot={{ left: 91, right: 1465, top: 117, bottom: 607 }}
          unitY={0.4464}
          originY={0}
          yLabel="dBSPL"
          degY={361}
          left={['110', '105', '100', '95', '90', '85', '80', '75', '70', '65', '60', '55', '50']}
          right={['180', '150', '120', '90', '60', '30', '0', '-30', '-60', '-90', '-120', '-150']}
          rightEvery={1}
          traces={RESPONSE}
          legend={[
            { name: 'Sys', color: BLUE },
            { name: 'Sys°', color: BLUE, dashed: true },
            { name: 'S1', color: '#f00' },
            { name: 'S2', color: '#00dc3c' },
            { name: 'S3', color: '#e800e8' },
          ]}
          legendY={[145, 167, 189, 212, 234]}
          footY={657}
        />
        <GraphWindow
          className="bottom-[23px] top-[686px]"
          title="Impedance (#1)"
          view="0 758 1625 602"
          plot={{ left: 83, right: 1474, top: 802, bottom: 1293 }}
          unitY={0.4847}
          originY={680}
          yLabel="Ohms"
          degY={1046}
          left={['24', '22', '20', '18', '16', '14', '12', '10', '8', '6', '4', '2', '0']}
          right={['90', '60', '30', '0', '-30', '-60']}
          rightEvery={2}
          traces={IMPEDANCE}
          legend={[
            { name: 'Sys', color: BLUE },
            { name: 'Sys°', color: BLUE, dashed: true },
          ]}
          legendY={[829, 852]}
          footY={1344}
        />
        <div className="pointer-events-none absolute bottom-[66px] right-[156px] text-[#999]/70">
          <p className="text-[27px] leading-9">Activate Windows</p>
          <p className="text-[19px] leading-6">Go to Settings to activate Windows.</p>
        </div>
      </main>
      <Taskbar />
    </div>
  )
}
